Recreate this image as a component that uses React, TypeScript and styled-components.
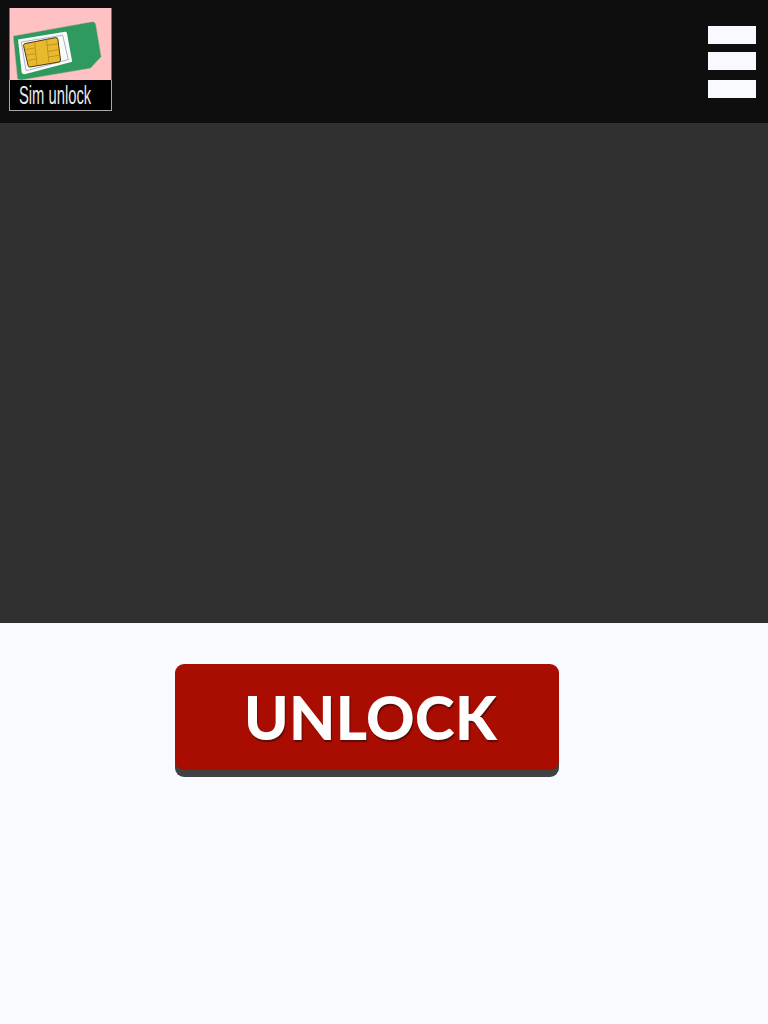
import styled, { createGlobalStyle } from 'styled-components'

const GlobalStyle = createGlobalStyle`
    html, body {
        margin: 0;
        padding: 0;
        background: #f9faff;
        font-family: 'Liberation Sans', Arial, sans-serif;
    }
`

const App = () => {
    return (
        <Page>
            <GlobalStyle />
            <Header>
                <Logo href="#">
                    <SimPicture viewBox="9 8 102 72" aria-hidden="true">
                        <rect x="9" y="8" width="102" height="72" fill="#ffc2c4" />
                        <path
                            d="M12.7 36 L91.7 21.7 Q94.6 21.8 95.2 24 L100.7 56.7 L90 68.3 L20.5 80 L17 79 Z"
                            fill="#2f9a60"
                            stroke="#d9a89a"
                            strokeWidth="0.5"
                        />
                        <path
                            d="M17.5 39.5 L64.5 31.7 Q66 31.6 66.4 33 L71.7 61.7 L25 74 Q22 74.8 21.2 72.5 Z"
                            fill="#fbfcf8"
                        />
                        <path
                            d="M20.8 42 L62.2 35.2 L67.8 59.6 L25.6 70.8 Z"
                            fill="none"
                            stroke="#aab1d2"
                            strokeWidth="1"
                        />
                        <path
                            d="M24.5 43.6 L55 37.6 Q57 37.4 57.4 39.5 L60 60 Q60 61.6 58.5 62 L29.5 67 Q28 67.2 27.6 65.5 L23 45.5 Q23 44 24.5 43.6 Z"
                            fill="#e9b92d"
                            stroke="#4f3a14"
                            strokeWidth="1"
                        />
                        <path
                            d="M25 49.5 L34 48 M26.2 55 L35 53.6 M27.4 60.5 L36 59 M46 45.5 L57.5 43.6 M47 51.5 L58.2 49.6 M48 57 L59 55.2 M34 41.5 L36.5 65 M46 39.5 L48.5 62.5"
                            stroke="#b58a1e"
                            strokeWidth="0.8"
                            fill="none"
                        />
                    </SimPicture>
                    <Caption>
                        <CaptionText>Sim unlock</CaptionText>
                    </Caption>
                </Logo>
                <MenuButton aria-label="Menu">
                    <MenuBar />
                    <MenuBar />
                    <MenuBar $gap={10} />
                </MenuButton>
            </Header>
            <Hero />
            <Content>
                <UnlockButton>UNLOCK</UnlockButton>
            </Content>
        </Page>
    )
}

export default App

const Page = styled.div`
    min-height: 1024px;
    background: #f9faff;
`

const Header = styled.header`
    height: 123px;
    box-sizing: border-box;
    padding: 8px 12px 0 9px;
    display: flex;
    justify-content: space-between;
    align-items: flex-start;
    background: #0e0e0e;
`

const Logo = styled.a`
    display: block;
    width: 103px;
    text-decoration: none;
`

const SimPicture = styled.svg`
    display: block;
    width: 103px;
    height: 72px;
`

const Caption = styled.div`
    height: 31px;
    box-sizing: border-box;
    border: 1px solid #a9a9a9;
    border-top: none;
    background: #000;
    overflow: hidden;
    padding-left: 9px;
`

const CaptionText = styled.span`
    display: block;
    width: 120px;
    font-family: 'Liberation Sans', Arial, sans-serif;
    font-size: 25px;
    line-height: 31px;
    color: #e8e8e8;
    white-space: nowrap;
    transform: scaleX(0.59);
    transform-origin: left center;
`

const MenuButton = styled.div`
    width: 48px;
    padding-top: 18px;
`

const MenuBar = styled.div<{ $gap?: number }>`
    height: 18px;
    margin-top: ${(props) => props.$gap ?? 8}px;
    background: #f9faff;

    &:first-child {
        margin-top: 0;
    }
`

const Hero = styled.section`
    height: 500px;
    background: #303030;
`

const Content = styled.main`
    padding: 41px 0 0 175px;
`

const UnlockButton = styled.button`
    display: block;
    width: 384px;
    height: 106px;
    margin: 0 0 7px;
    padding: 0 0 0 7px;
    border: none;
    border-radius: 9px;
    background: #a90c00;
    box-shadow: 0 7px 0 #3f4241;
    color: #fff;
    font-family: Lato, 'Liberation Sans', sans-serif;
    font-weight: 900;
    font-size: 60px;
    letter-spacing: 0.3px;
    text-align: center;
    text-shadow: 1px 2px 1px #5a0d06;
`
